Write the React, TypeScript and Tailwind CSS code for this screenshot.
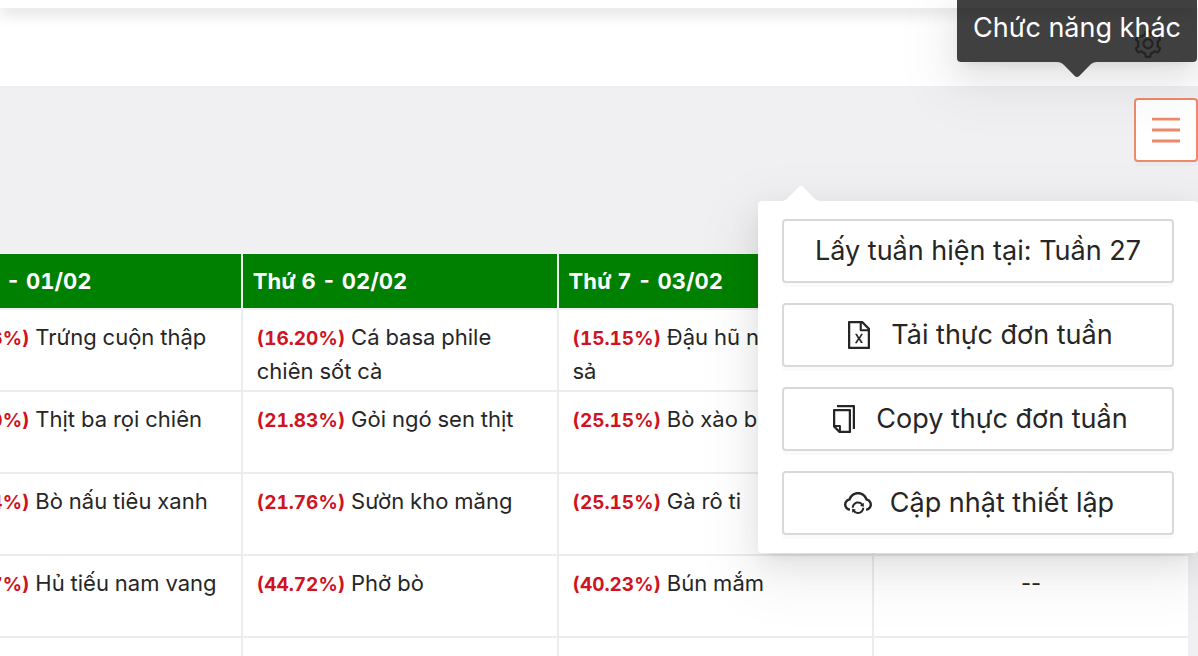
import type { ReactNode } from 'react'
import {
  AiOutlineCloudSync,
  AiOutlineCopy,
  AiOutlineFileExcel,
  AiOutlineMenu,
  AiOutlineSetting,
} from 'react-icons/ai'

type Dish = { percent: string; name: string } | null

const DAYS = ['Thứ 5 - 01/02', 'Thứ 6 - 02/02', 'Thứ 7 - 03/02', 'Chủ nhật - 04/02']

const ROWS: Dish[][] = [
  [
    { percent: '18.26%', name: 'Trứng cuộn thập' },
    { percent: '16.20%', name: 'Cá basa phile chiên sốt cà' },
    { percent: '15.15%', name: 'Đậu hũ non chiên sả' },
    null,
  ],
  [
    { percent: '22.40%', name: 'Thịt ba rọi chiên' },
    { percent: '21.83%', name: 'Gỏi ngó sen thịt' },
    { percent: '25.15%', name: 'Bò xào bông' },
    null,
  ],
  [
    { percent: '20.34%', name: 'Bò nấu tiêu xanh' },
    { percent: '21.76%', name: 'Sườn kho măng' },
    { percent: '25.15%', name: 'Gà rô ti' },
    null,
  ],
  [
    { percent: '42.37%', name: 'Hủ tiếu nam vang' },
    { percent: '44.72%', name: 'Phở bò' },
    { percent: '40.23%', name: 'Bún mắm' },
    null,
  ],
  [null, null, null, null],
]

function Arrow({ className }: { className: string }) {
  return (
    <svg viewBox="0 0 40 16" className={className} aria-hidden="true">
      <path d="M0 0 C3 0 5 1 7 3 L17.5 13.8 Q20 16.2 22.5 13.8 L33 3 C35 1 37 0 40 0 Z" fill="currentColor" />
    </svg>
  )
}

function MenuButton({ icon, children }: { icon?: ReactNode; children: ReactNode }) {
  return (
    <button
      type="button"
      className="flex h-16 w-full items-center justify-center gap-4 rounded border-2 border-[#d9d9d9] bg-white text-[27px] text-[#262626] shadow-[0_4px_0_rgba(0,0,0,0.02)]"
    >
      {icon}
      <span>{children}</span>
    </button>
  )
}

function WeekTable() {
  return (
    <table className="w-[1263px] shrink-0 table-fixed border-separate border-spacing-0 bg-white font-['Inter',sans-serif] tabular-nums">
      <thead>
        <tr>
          {DAYS.map((day) => (
            <th
              key={day}
              scope="col"
              className="h-14 border-r-2 border-b-2 border-[#f0f0f3] bg-[#008000] bg-clip-padding px-[10px] text-left text-[22px] font-bold text-white"
            >
              {day}
            </th>
          ))}
        </tr>
      </thead>
      <tbody>
        {ROWS.map((row, r) => (
          <tr key={r}>
            {row.map((dish, c) => (
              <td
                key={c}
                className="h-[82px] border-r-2 border-b-2 border-[#ececee] px-[14px] pt-[10px] align-top text-[22px] leading-[34px] text-[#262626] last:border-r-[#f0f0f3]"
              >
                {dish ? (
                  <>
                    <b className="text-[19px] leading-none font-bold text-[#cf1322]">({dish.percent})</b> {dish.name}
                  </>
                ) : (
                  <div className="text-center proportional-nums">--</div>
                )}
              </td>
            ))}
          </tr>
        ))}
      </tbody>
    </table>
  )
}

export default function App() {
  return (
    <div className="relative h-screen overflow-hidden bg-[#f0f0f3] font-['Inter',sans-serif]">
      <div className="relative h-2 bg-white shadow-[0_4px_16px_rgba(0,0,0,0.2)]" />
      <header className="flex h-[78px] items-center justify-end bg-white px-[34px] pb-[6px]">
        <button type="button" aria-label="Cài đặt" className="text-[#8c8c8c]">
          <AiOutlineSetting size={32} />
        </button>
      </header>

      <main>
        <div className="flex justify-end pt-3 pb-[92px]">
          <button
            type="button"
            aria-label="Chức năng khác"
            className="flex size-16 items-center justify-center rounded border-2 border-[#ee8a6c] bg-white text-[#ee8a6c] shadow-[0_4px_0_rgba(0,0,0,0.02)]"
          >
            <AiOutlineMenu size={36} />
          </button>
        </div>
        <div className="flex justify-end overflow-hidden pr-2">
          <WeekTable />
        </div>
      </main>

      <div
        role="tooltip"
        className="absolute top-0 right-px flex h-[62px] items-start rounded-b bg-black/75 px-4 pt-2 text-[27px] leading-10 text-white shadow-[0_12px_32px_rgba(0,0,0,0.08),0_6px_12px_-8px_rgba(0,0,0,0.12),0_18px_56px_16px_rgba(0,0,0,0.05)]"
      >
        Chức năng khác
        <Arrow className="absolute top-full left-1/2 h-4 w-10 -translate-x-1/2 text-[#404040]" />
      </div>

      <div className="absolute top-[201px] right-0 flex w-[440px] flex-col gap-5 rounded bg-white px-6 py-[18px] shadow-[0_12px_32px_rgba(0,0,0,0.08),0_6px_12px_-8px_rgba(0,0,0,0.12),0_18px_56px_16px_rgba(0,0,0,0.05)]">
        <Arrow className="absolute bottom-full left-[23px] h-4 w-10 rotate-180 text-white" />
        <MenuButton>Lấy tuần hiện tại: Tuần 27</MenuButton>
        <MenuButton icon={<AiOutlineFileExcel size={32} />}>Tải thực đơn tuần</MenuButton>
        <MenuButton icon={<AiOutlineCopy size={32} />}>Copy thực đơn tuần</MenuButton>
        <MenuButton icon={<AiOutlineCloudSync size={32} />}>Cập nhật thiết lập</MenuButton>
      </div>
    </div>
  )
}
